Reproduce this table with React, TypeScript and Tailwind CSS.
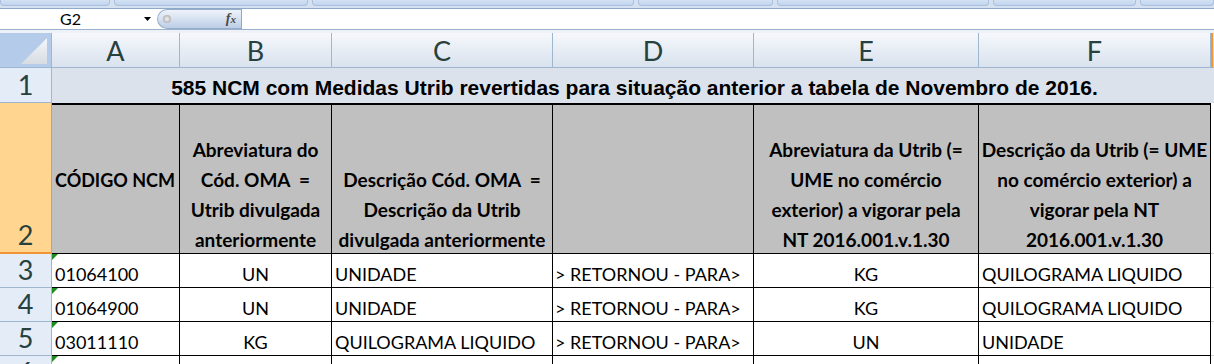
import React from 'react'

const rows = [
  { n: 3, ncm: '01064100', abrevAnt: 'UN', descAnt: 'UNIDADE', abrevNova: 'KG', descNova: 'QUILOGRAMA LIQUIDO' },
  { n: 4, ncm: '01064900', abrevAnt: 'UN', descAnt: 'UNIDADE', abrevNova: 'KG', descNova: 'QUILOGRAMA LIQUIDO' },
  { n: 5, ncm: '03011110', abrevAnt: 'KG', descAnt: 'QUILOGRAMA LIQUIDO', abrevNova: 'UN', descNova: 'UNIDADE' },
]

const ribbonTabs = ['w-[110px]', 'w-[194px]', 'w-[322px]', 'w-[135px]', 'w-[212px]', 'w-[143px]', 'flex-1']

function ColHead({ label, className }: { label: string; className: string }) {
  return (
    <div
      className={`${className} h-full shrink-0 flex items-center justify-center border-r border-b border-[#9EB6CE] bg-linear-to-b from-[#F6F8FC] to-[#D9E2EE] text-[27px] text-[#27413E] pt-[2px]`}
    >
      {label}
    </div>
  )
}

function RowHead({ n, active }: { n: number; active?: boolean }) {
  return (
    <div
      className={`w-[52px] h-full shrink-0 flex items-end justify-center pb-[1px] text-[27px] leading-[32px] text-[#27413E] border-r ${
        active ? 'bg-[#FFD58F] border-[#F29536] border-b-2' : 'bg-[#E4ECF7] border-[#9EB6CE] border-b'
      }`}
    >
      {n}
    </div>
  )
}

function HeadCell({ lines, className }: { lines: string[]; className: string }) {
  return (
    <div
      className={`${className} h-full shrink-0 flex flex-col justify-end items-center text-center border-r border-b border-black leading-[30px] whitespace-pre`}
    >
      <div className="flex flex-col items-center translate-y-[2px]">
        {lines.map((l) => (
          <span key={l}>{l}</span>
        ))}
      </div>
    </div>
  )
}

function NumberFlag() {
  // little green "number stored as text" marker
  return <span className="absolute left-0 top-0 w-0 h-0 border-t-[6px] border-r-[6px] border-t-[#1E8C1E] border-r-transparent" />
}

export default function App() {
  return (
    <div className="w-[1214px] h-[364px] overflow-hidden bg-white font-['Lato',sans-serif] text-black">
      {/* ribbon bottom edge */}
      <div className="h-[9px] flex gap-[4px] bg-[#D5E1F0] border-b border-[#8FA9CA]">
        {ribbonTabs.map((w, i) => (
          <div
            key={i}
            className={`${w} h-[6px] rounded-b-[4px] border border-t-0 border-[#A9C0DE] bg-linear-to-b from-[#D3E1F3] to-[#C2D5EE]`}
          />
        ))}
      </div>

      {/* formula bar */}
      <div className="h-[20px] flex bg-white">
        <div className="w-[157px] shrink-0 flex items-center relative">
          <span className="ml-[60px] text-[16px] leading-none">G2</span>
          <svg className="absolute left-[144px] top-[8px]" width="7" height="4" viewBox="0 0 7 4">
            <path d="M0 0h7L3.5 4z" fill="#000" />
          </svg>
        </div>
        <div className="w-[84px] shrink-0 h-full flex items-center justify-between rounded-l-full border border-r-0 border-[#97AECB] bg-linear-to-b from-[#EEF3FA] via-[#D6E1F0] to-[#BCCDE6] pl-[5px] pr-[5px]">
          <span className="w-[8px] h-[8px] rounded-full bg-radial from-[#F4F4F4] to-[#9C9C9C]" />
          <span className="font-['Liberation_Serif',serif] italic font-bold text-[14px] leading-none text-[#4A4A4A]">
            f<span className="text-[11px]">x</span>
          </span>
        </div>
        <div className="flex-1 border-l border-[#8FA9CA]" />
      </div>
      <div className="h-[4px] border-t border-[#9AB2CE] bg-[#EEF2F8]" />

      {/* column headers */}
      <div className="h-[35px] flex">
        <div className="w-[52px] shrink-0 h-full relative border-r border-b border-[#9EB6CE] bg-[#B4CBE9]">
          <svg className="absolute right-[4px] bottom-[3px]" width="26" height="26" viewBox="0 0 26 26">
            <defs>
              <linearGradient id="corner" x1="0" y1="0" x2="0" y2="1">
                <stop offset="0" stopColor="#F4F6F9" />
                <stop offset="1" stopColor="#D7DCE3" />
              </linearGradient>
            </defs>
            <path d="M26 0V26H0z" fill="url(#corner)" />
          </svg>
        </div>
        <ColHead label="A" className="w-[128px]" />
        <ColHead label="B" className="w-[152px]" />
        <ColHead label="C" className="w-[221px]" />
        <ColHead label="D" className="w-[201px]" />
        <ColHead label="E" className="w-[225px]" />
        <ColHead label="F" className="w-[232px]" />
        <div className="flex-1 h-full border-l-2 border-b border-l-[#F29536] border-b-[#9EB6CE] bg-linear-to-b from-[#FCE2B8] to-[#F8C77A]" />
      </div>

      {/* row 1: merged title */}
      <div className="h-[35px] flex">
        <RowHead n={1} />
        <div className="flex-1 h-full flex items-center justify-end bg-[#DBE2EB]">
          <div className="w-[1159px] text-center pt-[3px] font-['Liberation_Sans',Arial,sans-serif] font-bold text-[21px] leading-none">
            585 NCM com Medidas Utrib revertidas para situação anterior a tabela de Novembro de 2016.
          </div>
        </div>
      </div>

      {/* row 2: column titles */}
      <div className="h-[151px] flex">
        <RowHead n={2} active />
        <div className="flex h-full border-t-2 border-black bg-[#C0C0C0] font-bold text-[19px]">
          <div className="w-[128px] h-full shrink-0 flex items-center pl-[3px] pt-[2px] border-r border-b border-black whitespace-nowrap text-[18px]">
            CÓDIGO NCM
          </div>
          <HeadCell className="w-[152px]" lines={['Abreviatura do', 'Cód. OMA  =', 'Utrib divulgada', 'anteriormente']} />
          <HeadCell className="w-[221px]" lines={['Descrição Cód. OMA  =', 'Descrição da Utrib', 'divulgada anteriormente']} />
          <HeadCell className="w-[201px]" lines={[]} />
          <HeadCell
            className="w-[225px]"
            lines={['Abreviatura da Utrib (=', 'UME no comércio', 'exterior) a vigorar pela', 'NT 2016.001.v.1.30']}
          />
          <HeadCell
            className="w-[232px]"
            lines={['Descrição da Utrib (= UME', 'no comércio exterior) a', 'vigorar pela NT', '2016.001.v.1.30']}
          />
        </div>
        <div className="flex-1 h-full border-b border-[#D4D4D4]" />
      </div>

      {/* data rows */}
      {rows.map((r) => (
        <div key={r.n} className="h-[34px] flex">
          <RowHead n={r.n} />
          <div className="flex h-full text-[18px] leading-[26px]">
            <div className="w-[128px] h-full relative flex items-end pl-[3px] border-r border-b border-black">
              <NumberFlag />
              {r.ncm}
            </div>
            <div className="w-[152px] h-full flex items-end justify-center border-r border-b border-black">
              {r.abrevAnt}
            </div>
            <div className="w-[221px] h-full flex items-end pl-[3px] border-r border-b border-black whitespace-nowrap">
              {r.descAnt}
            </div>
            <div className="w-[201px] h-full flex items-end pl-[2px] border-r border-b border-black whitespace-nowrap">
              {'> RETORNOU - PARA>'}
            </div>
            <div className="w-[225px] h-full flex items-end justify-center border-r border-b border-black">
              {r.abrevNova}
            </div>
            <div className="w-[232px] h-full flex items-end pl-[3px] border-r border-b border-black whitespace-nowrap">
              {r.descNova}
            </div>
          </div>
          <div className="flex-1 h-full border-b border-[#D4D4D4]" />
        </div>
      ))}

      {/* row 6, cut off by the window */}
      <div className="h-[34px] flex">
        <RowHead n={6} />
        <div className="flex h-full">
          <div className="w-[128px] h-full relative border-r border-black">
            <NumberFlag />
          </div>
          <div className="w-[152px] h-full border-r border-black" />
          <div className="w-[221px] h-full border-r border-black" />
          <div className="w-[201px] h-full border-r border-black" />
          <div className="w-[225px] h-full border-r border-black" />
          <div className="w-[232px] h-full border-r border-black" />
        </div>
      </div>
    </div>
  )
}
